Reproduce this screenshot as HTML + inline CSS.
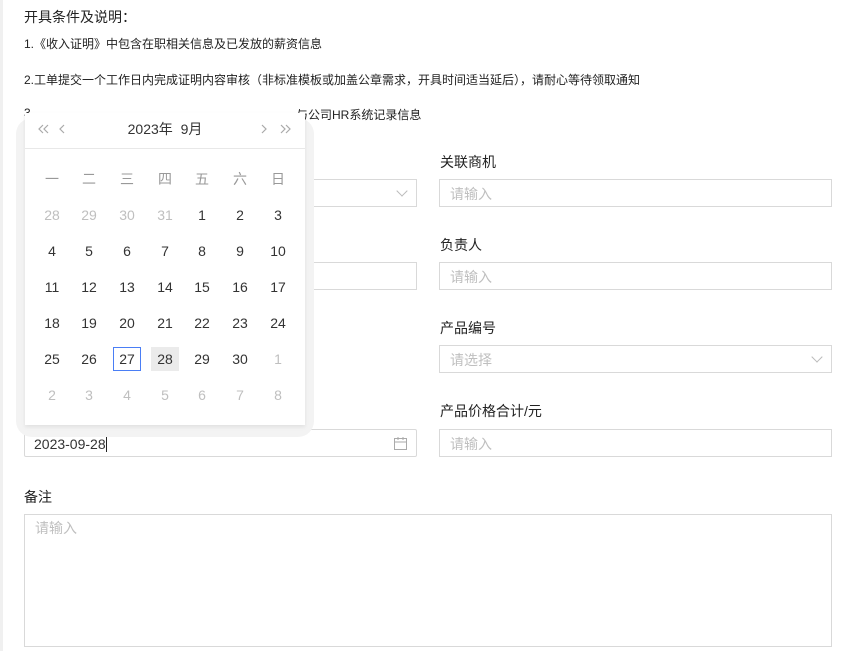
<!DOCTYPE html>
<html><head><meta charset="utf-8">
<style>
*{box-sizing:border-box;margin:0;padding:0}
body{width:853px;height:651px;background:#fff;position:relative;overflow:hidden;font-family:"Liberation Sans","Noto Sans CJK SC",sans-serif;color:#222}
.a{position:absolute}
.t{font-size:12px;color:#222;white-space:nowrap}
.lbl{font-size:14px;color:#222;white-space:nowrap}
.inp{position:absolute;height:28px;border:1px solid #d9d9d9;background:#fff;font-size:14px;color:#bfbfbf;padding-left:10px;line-height:28px}
.chev{position:absolute;right:10px;width:8px;height:8px;border-right:1px solid #bbb;border-bottom:1px solid #bbb;transform:rotate(45deg);top:7px}
.cell{position:absolute;width:28px;height:24px;line-height:24px;text-align:center;font-size:14px;color:#333}
.g{color:#bfbfbf}
.w{color:#999}
</style></head><body>
<div class="a" style="left:0;top:0;width:3px;height:651px;background:#f0f0f0"></div>
<div class="a" style="left:24px;top:7px;font-size:14px;color:#222">开具条件及说明：</div>
<div class="a t" style="left:24px;top:35px">1.《收入证明》中包含在职相关信息及已发放的薪资信息</div>
<div class="a t" style="left:24px;top:71px">2.工单提交一个工作日内完成证明内容审核（非标准模板或加盖公章需求，开具时间适当延后），请耐心等待领取通知</div>
<div class="a t" style="left:24px;top:106px">3.</div>
<div class="a t" style="left:296px;top:106px">与公司HR系统记录信息</div>

<div class="a lbl" style="left:440px;top:152px">关联商机</div>
<div class="inp" style="left:439px;top:179px;width:393px">请输入</div>
<div class="a lbl" style="left:440px;top:235px">负责人</div>
<div class="inp" style="left:439px;top:262px;width:393px">请输入</div>
<div class="a lbl" style="left:440px;top:318px">产品编号</div>
<div class="inp" style="left:439px;top:345px;width:393px">请选择<div class="chev"></div></div>
<div class="a lbl" style="left:440px;top:401px">产品价格合计/元</div>
<div class="inp" style="left:439px;top:429px;width:393px">请输入</div>

<div class="inp" style="left:24px;top:179px;width:393px"><div class="chev"></div></div>
<div class="inp" style="left:24px;top:262px;width:393px"></div>
<div class="inp" style="left:24px;top:429px;width:393px;color:#333;border-radius:2px;padding-left:9px">2023-09-28<span style="display:inline-block;width:1px;height:16px;background:#222;vertical-align:-3px"></span>
<svg class="a" style="right:9px;top:7px" width="13" height="13" viewBox="0 0 13 13"><rect x="0.5" y="1.5" width="12" height="11" fill="none" stroke="#aaa"/><line x1="0.5" y1="5" x2="12.5" y2="5" stroke="#aaa"/><line x1="4" y1="0" x2="4" y2="3" stroke="#aaa"/><line x1="9" y1="0" x2="9" y2="3" stroke="#aaa"/></svg></div>

<div class="a lbl" style="left:24px;top:487px">备注</div>
<div class="inp" style="left:24px;top:514px;width:808px;height:133px;line-height:26px">请输入</div>

<div class="a" style="left:16px;top:118px;width:298px;height:319px;background:#f3f3f3;border-radius:16px"></div>
<div class="a" style="left:25px;top:113px;width:280px;height:312px;background:#fff;box-shadow:0 2px 4px rgba(0,0,0,.08)">
  <svg class="a" style="left:13px;top:11px" width="30" height="10" viewBox="0 0 30 10"><path d="M5 1L1 5L5 9M10 1L6 5L10 9M26 1L22 5L26 9" fill="none" stroke="#aaa" stroke-width="1.2"/></svg>
  <div class="a" style="left:0;width:280px;top:6px;text-align:center;font-size:14px;color:#333">2023年&nbsp;&nbsp;9月</div>
  <svg class="a" style="left:236px;top:11px" width="30" height="10" viewBox="0 0 30 10"><path d="M1 1L5 5L1 9M20 1L24 5L20 9M25 1L29 5L25 9" fill="none" stroke="#aaa" stroke-width="1.2"/></svg>
  <div class="a" style="left:0;top:35px;width:280px;height:1px;background:#e8e8e8"></div>
</div>
<div id="cal"></div>
<script>
var cx=[52,89,127,165,202,240,278],rows=[179,215,251,287,323,359,395];
var wk=["一","二","三","四","五","六","日"];
var d=[[28,29,30,31,1,2,3],[4,5,6,7,8,9,10],[11,12,13,14,15,16,17],[18,19,20,21,22,23,24],[25,26,27,28,29,30,1],[2,3,4,5,6,7,8]];
var h="";
for(var i=0;i<7;i++)h+='<div class="cell w" style="left:'+(cx[i]-14)+'px;top:'+(rows[0]-12)+'px">'+wk[i]+'</div>';
for(var r=0;r<6;r++)for(var i=0;i<7;i++){var v=d[r][i];var g=(r==0&&i<4)||(r==4&&i==6)||r==5;var st='';
if(r==4&&i==2)st='border:1px solid #4a7ef5;line-height:22px;';if(r==4&&i==3)st='background:#ebebeb;';
h+='<div class="cell'+(g?' g':'')+'" style="'+st+'left:'+(cx[i]-14)+'px;top:'+(rows[r+1]-12)+'px">'+v+'</div>';}
document.getElementById('cal').innerHTML=h;
</script>
</body></html>
